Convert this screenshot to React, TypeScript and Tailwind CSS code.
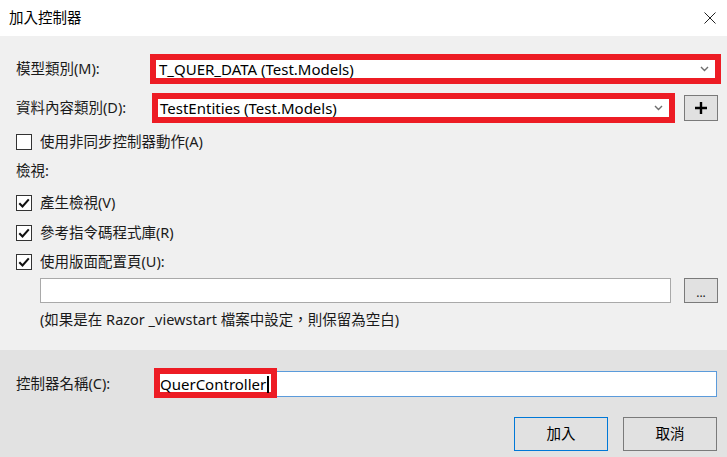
import React from "react";

const font = { fontFamily: '"Noto Sans", "Noto Sans CJK TC", sans-serif' };

function Chevron() {
  return (
    <svg width="9" height="6" viewBox="0 0 9 6" className="mr-[6px]">
      <path d="M1 1 L4.5 4.5 L8 1" fill="none" stroke="#6d6d6d" strokeWidth="1.4" />
    </svg>
  );
}

function Check({ checked }: { checked?: boolean }) {
  return (
    <div className="w-[16px] h-[16px] border border-[#333] bg-white flex items-center justify-center">
      {checked && (
        <svg width="12" height="12" viewBox="0 0 12 12">
          <path d="M1.3 6.2 L4.5 9.4 L10.8 2.4" fill="none" stroke="#111" strokeWidth="2.1" />
        </svg>
      )}
    </div>
  );
}

function CheckRow({ label, checked, mt }: { label: string; checked?: boolean; mt: string }) {
  return (
    <div className={`flex items-center h-[22px] ${mt}`}>
      <Check checked={checked} />
      <span className="ml-[8px]">{label}</span>
    </div>
  );
}

export default function App() {
  return (
    <div
      className="w-[727px] h-[457px] flex flex-col bg-[#f0f0f0] text-[14.5px] text-[#1a1a1a] overflow-hidden"
      style={font}
    >
      {/* title bar */}
      <div className="h-[36px] bg-white flex items-center justify-between pl-[9px] pr-[11px]">
        <span className="text-[14.5px] text-black">加入控制器</span>
        <svg width="12" height="12" viewBox="0 0 12 12">
          <path d="M0.5 0.5 L11.5 11.5 M11.5 0.5 L0.5 11.5" stroke="#222" strokeWidth="1" />
        </svg>
      </div>

      {/* body */}
      <div className="h-[314px] pl-[16px]">
        <div className="flex items-center h-[30px] mt-[18px]">
          <span className="w-[134px] shrink-0">模型類別(M):</span>
          <div className="w-[571px] h-[30px] border-[6px] border-[#ed1c24] bg-white flex items-center justify-between pl-[3px]">
            <span className="text-[15px] text-black">T_QUER_DATA (Test.Models)</span>
            <Chevron />
          </div>
        </div>

        <div className="flex items-center h-[30px] mt-[9px]">
          <span className="w-[136px] shrink-0">資料內容類別(D):</span>
          <div className="w-[523px] h-[30px] border-[6px] border-[#ed1c24] bg-white flex items-center justify-between pl-[2px]">
            <span className="text-[15px] text-black">TestEntities (Test.Models)</span>
            <Chevron />
          </div>
          <div className="ml-[9px] w-[34px] h-[26px] border border-[#7a7a7a] bg-[#e1e1e1] flex items-center justify-center">
            <svg width="14" height="14" viewBox="0 0 14 14">
              <path d="M7 1 V13 M1 7 H13" stroke="#000" strokeWidth="2.4" />
            </svg>
          </div>
        </div>

        <CheckRow label="使用非同步控制器動作(A)" mt="mt-[8px]" />

        <div className="flex items-center h-[22px] mt-[7px]">檢視:</div>

        <CheckRow label="產生檢視(V)" checked mt="mt-[10px]" />
        <CheckRow label="參考指令碼程式庫(R)" checked mt="mt-[8px]" />
        <CheckRow label="使用版面配置頁(U):" checked mt="mt-[7px]" />

        <div className="flex items-center mt-[5px] ml-[24px]">
          <div className="w-[631px] h-[25px] border border-[#a9a9a9] bg-white" />
          <div className="ml-[13px] w-[34px] h-[25px] border border-[#7a7a7a] bg-[#e1e1e1] flex items-center justify-center text-[12px] leading-none pt-[4px]">
            ...
          </div>
        </div>

        <div className="flex items-center h-[22px] mt-[6px] ml-[24px]">
          (如果是在 Razor _viewstart 檔案中設定，則保留為空白)
        </div>
      </div>

      {/* footer */}
      <div className="flex-1 bg-[#e2e2e2] pl-[16px]">
        <div className="flex items-center mt-[21px]">
          <span className="w-[141px] shrink-0">控制器名稱(C):</span>
          <div className="relative w-[560px] h-[26px] border border-[#5b9bdb] bg-white flex items-center pl-[2px]">
            <span className="relative z-10 text-[15px] text-black">QuerController</span>
            <span className="relative z-10 w-[2px] h-[17px] bg-black ml-[1px]" />
            <div className="absolute left-[-4px] top-[-4px] w-[123px] h-[30px] border-[6px] border-[#ed1c24] bg-white" />
          </div>
        </div>

        <div className="flex justify-end gap-[15px] mt-[20px] pr-[10px]">
          <button className="w-[94px] h-[34px] border border-[#0078d7] bg-[#e1e1e1] text-[14.5px] text-black">
            加入
          </button>
          <button className="w-[94px] h-[34px] border border-[#7a7a7a] bg-[#e1e1e1] text-[14.5px] text-black">
            取消
          </button>
        </div>
      </div>
    </div>
  );
}
